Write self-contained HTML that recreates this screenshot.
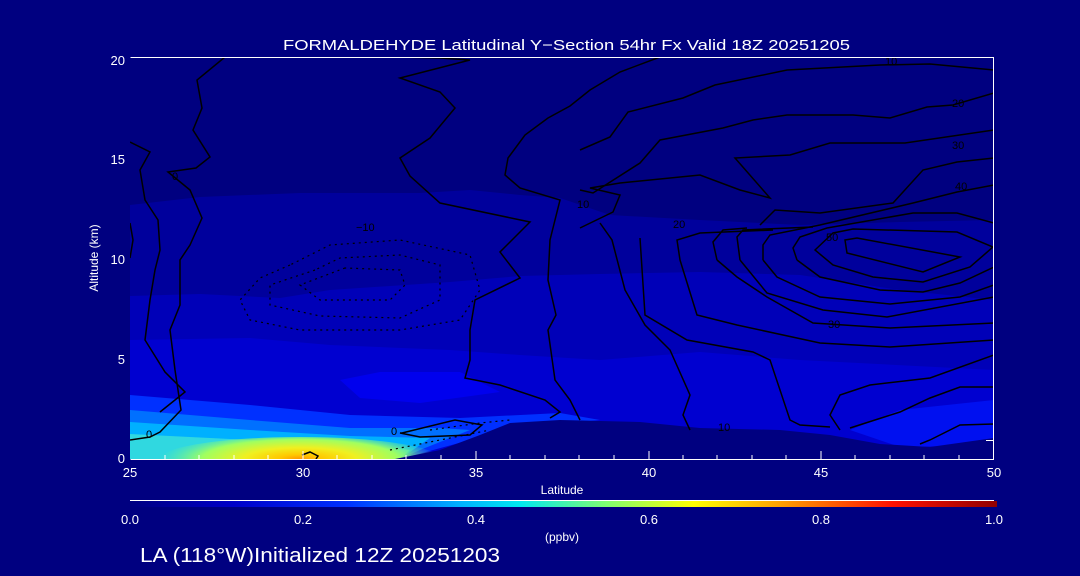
<!DOCTYPE html>
<html><head><meta charset="utf-8"><style>
html,body{margin:0;padding:0;background:#000080;}
body{width:1080px;height:576px;overflow:hidden;}
svg{display:block}
svg text{font-family:"Liberation Sans",sans-serif;fill:#fff;}
</style></head><body>
<svg width="1080" height="576" viewBox="0 0 1080 576" xmlns="http://www.w3.org/2000/svg">
<defs>
<linearGradient id="cb" x1="0" x2="1" y1="0" y2="0">
<stop offset="0" stop-color="#000080"/>
<stop offset="0.12" stop-color="#0000c8"/>
<stop offset="0.25" stop-color="#0030ff"/>
<stop offset="0.38" stop-color="#00b0ff"/>
<stop offset="0.45" stop-color="#00e8f0"/>
<stop offset="0.55" stop-color="#80ff70"/>
<stop offset="0.65" stop-color="#ffff00"/>
<stop offset="0.75" stop-color="#ffa000"/>
<stop offset="0.88" stop-color="#ff1000"/>
<stop offset="1" stop-color="#900000"/>
</linearGradient>
<radialGradient id="hot" cx="300" cy="459" r="140" gradientUnits="userSpaceOnUse" gradientTransform="translate(300 459) scale(1 0.2) translate(-300 -459)">
<stop offset="0" stop-color="#ff9800"/>
<stop offset="0.15" stop-color="#ffc800"/>
<stop offset="0.4" stop-color="#f0f020"/>
<stop offset="0.7" stop-color="#a0ff60"/>
<stop offset="1" stop-color="#60f0a0" stop-opacity="0"/>
</radialGradient>
<clipPath id="pl"><rect x="130" y="57" width="864" height="402"/></clipPath>
</defs>
<g clip-path="url(#pl)">
<rect x="130" y="57" width="864" height="402" fill="#000080"/>
<path d="M130 205 L200 197 L300 193 L420 193 L470 190 L520 195 L560 198 L610 215 L700 220 L800 225 L900 222 L994 220 L994 459 L130 459Z" fill="#00009c"/>
<path d="M130 296 L200 294 L280 298 L330 290 L450 282 L520 276 L600 274 L700 272 L800 275 L900 290 L994 300 L994 459 L130 459Z" fill="#0000b8"/>
<path d="M130 340 L250 338 L330 345 L450 350 L520 355 L600 360 L700 352 L800 360 L994 370 L994 459 L130 459Z" fill="#0000d0"/>
<path d="M340 380 L380 372 L460 372 L500 392 L420 403 L360 398Z" fill="#0000ee"/>
<path d="M130 395 L250 405 L350 415 L460 418 L560 413 L600 420 L500 430 L470 440 L400 459 L130 459Z" fill="#0030ff"/>
<path d="M130 410 L250 420 L350 428 L440 428 L470 430 L420 450 L400 459 L130 459Z" fill="#0070ff"/>
<path d="M130 422 L250 430 L350 436 L430 438 L400 459 L130 459Z" fill="#00b0ff"/>
<path d="M130 434 L250 440 L350 446 L410 450 L400 459 L130 459Z" fill="#30d8e0"/>
<ellipse cx="300" cy="459" rx="140" ry="22" fill="url(#hot)"/>
<path d="M850 430 L900 410 L994 400 L994 445 L900 447Z" fill="#0010f0"/>
<path d="M395 459 L440 450 L480 435 L510 423 L560 420 L640 422 L700 428 L780 430 L830 435 L880 444 L930 447 L994 438 L994 459Z" fill="#000080"/>
<g fill="none" stroke="#000" stroke-width="1.5">
<path d="M225 57 L197 80 L202 108 L193 130 L210 157 L196 168 L168 172 L190 190 L202 218 L190 245 L180 260 L180 305 L170 330 L175 370 L181 410 L160 432 L150 437 L130 440"/>
<path d="M130 142 L150 152 L140 170 L145 200 L158 220 L160 250 L155 270 L150 300 L145 340 L165 372 L185 392 L175 400 L160 412"/>
<path d="M130 223 L133 240 L130 258"/>
<path d="M395 57 L440 58 L470 60 L400 78 L440 92 L455 108 L430 138 L400 158 L410 176 L440 203 L530 222 L510 242 L500 252 L520 278 L475 300 L470 330 L470 360 L465 378 L500 385 L545 400 L560 412 L550 418"/>
<path d="M660 57 L620 72 L590 90 L570 106 L548 118 L525 135 L508 158 L505 175 L520 188 L560 200 L550 240 L548 280 L556 315 L548 330 L555 380 L570 400 L580 420"/>
<path d="M580 150 L610 137 L628 112 L683 98 L715 85 L787 70 L880 65 L930 64 L994 70"/>
<path d="M580 190 L593 193 L640 163 L660 140 L723 128 L753 120 L787 115 L853 115 L890 118 L927 107 L953 105 L994 93"/>
<path d="M994 158 L957 162 L923 170 L893 203 L820 213 L775 210 L760 225"/>
<path d="M580 228 L613 212 L620 195 L590 188 L620 183 L700 175 L740 190 L770 198 L735 158 L790 155 L830 143 L905 143 L994 130"/>
<path d="M845 240 L857 238 L960 257 L923 272 L847 253Z"/>
<path d="M815 250 L833 233 L853 229 L957 232 L993 247 L970 267 L923 282 L873 277 L833 265Z"/>
<path d="M797 260 L793 248 L800 237 L827 228 L913 213 L957 213 L994 223 M994 267 L960 283 L923 292 L880 290 L820 277 L797 260"/>
<path d="M763 260 L763 245 L770 235 L820 225 L913 203 L957 192 L994 185 M994 285 L960 297 L890 304 L820 297 L777 277 L763 260"/>
<path d="M740 260 L737 237 L743 230 L813 227 M994 297 L887 317 L823 310 L767 293 L740 260"/>
<path d="M717 260 L713 242 L723 230 L747 228 M994 323 L890 328 L813 323 L767 297 L737 277 L717 260"/>
<path d="M680 260 L677 240 L700 233 L773 230 M994 340 L890 347 L820 343 L737 325 L697 315 L680 260"/>
<path d="M640 238 L645 315 L687 340 L753 352 L770 360 L790 420 L800 425 L830 427"/>
<path d="M600 223 L612 240 L625 290 L645 325 L670 350 L690 395 L683 415 L690 430"/>
<path d="M994 355 L930 378 L870 385 L840 395 L830 415 L840 430"/>
<path d="M994 387 L960 387 L930 398 L900 412 L850 428"/>
<path d="M994 424 L960 425 L930 440 L920 444"/>
<path d="M402 433 L455 420 L482 425 L470 435 L420 437 L400 433Z"/>
<path d="M302 455 L310 452 L318 456 L316 459"/>
</g>
<g fill="none" stroke="#000" stroke-width="1.2" stroke-dasharray="2 4">
<path d="M290 265 L260 278 L240 300 L250 320 L300 330 L400 330 L460 320 L480 290 L470 255 L400 240 L330 245Z"/>
<path d="M315 270 L270 285 L270 305 L320 316 L400 318 L440 300 L440 265 L400 255 L340 258Z"/>
<path d="M345 268 L300 285 L320 300 L390 300 L405 285 L400 270Z"/>
<path d="M430 430 L480 423 L510 420"/>
<path d="M390 450 L440 440 L490 430"/>
</g>
</g>
<g font-size="11">
<text x="172" y="180" style="fill:#000">0</text>
<text x="356" y="231" style="fill:#000">−10</text>
<text x="577" y="208" style="fill:#000">10</text>
<text x="673" y="228" style="fill:#000">20</text>
<text x="826" y="241" style="fill:#000">50</text>
<text x="828" y="328" style="fill:#000">30</text>
<text x="952" y="107" style="fill:#000">20</text>
<text x="952" y="149" style="fill:#000">30</text>
<text x="955" y="190" style="fill:#000">40</text>
<text x="885" y="65" style="fill:#000">10</text>
<text x="718" y="431" style="fill:#000">10</text>
<text x="146" y="438" style="fill:#000">0</text>
<text x="391" y="435" style="fill:#000">0</text>
</g>
<g stroke="#fff" stroke-width="1" fill="none">
<path d="M130.5 57.5 H993.5 V459.5 H130.5"/>
<path d="M165 459 v-4 M199 459 v-4 M234 459 v-4 M268 459 v-4 M303 459 v-8 M337 459 v-4 M372 459 v-4 M406 459 v-4 M441 459 v-4 M476 459 v-8 M510 459 v-4 M545 459 v-4 M579 459 v-4 M614 459 v-4 M649 459 v-8 M683 459 v-4 M717 459 v-4 M752 459 v-4 M786 459 v-4 M821 459 v-8 M855 459 v-4 M890 459 v-4 M924 459 v-4 M959 459 v-4"/>
<path d="M994 440.5 h-8"/>
</g>
<rect x="130" y="500" width="864" height="1.5" fill="#fff"/>
<rect x="130" y="501" width="867" height="6" fill="url(#cb)"/>
<g font-size="13">
<text x="283" y="50" font-size="15" textLength="567" lengthAdjust="spacingAndGlyphs">FORMALDEHYDE Latitudinal Y−Section 54hr  Fx Valid 18Z 20251205</text>
<text x="125" y="65" text-anchor="end">20</text>
<text x="125" y="164" text-anchor="end">15</text>
<text x="125" y="264" text-anchor="end">10</text>
<text x="125" y="364" text-anchor="end">5</text>
<text x="125" y="463" text-anchor="end">0</text>
<text x="130" y="477" text-anchor="middle">25</text>
<text x="303" y="477" text-anchor="middle">30</text>
<text x="476" y="477" text-anchor="middle">35</text>
<text x="649" y="477" text-anchor="middle">40</text>
<text x="821" y="477" text-anchor="middle">45</text>
<text x="994" y="477" text-anchor="middle">50</text>
<text x="562" y="494" text-anchor="middle" font-size="12">Latitude</text>
<text x="130" y="524" text-anchor="middle">0.0</text>
<text x="303" y="524" text-anchor="middle">0.2</text>
<text x="476" y="524" text-anchor="middle">0.4</text>
<text x="649" y="524" text-anchor="middle">0.6</text>
<text x="821" y="524" text-anchor="middle">0.8</text>
<text x="994" y="524" text-anchor="middle">1.0</text>
<text x="562" y="541" text-anchor="middle" font-size="12">(ppbv)</text>
<text transform="translate(98 258) rotate(-90)" text-anchor="middle" font-size="12">Altitude (km)</text>
<text x="140" y="562" font-size="20" textLength="360" lengthAdjust="spacingAndGlyphs">LA (118°W)Initialized 12Z 20251203</text>
</g>
</svg>
</body></html>
